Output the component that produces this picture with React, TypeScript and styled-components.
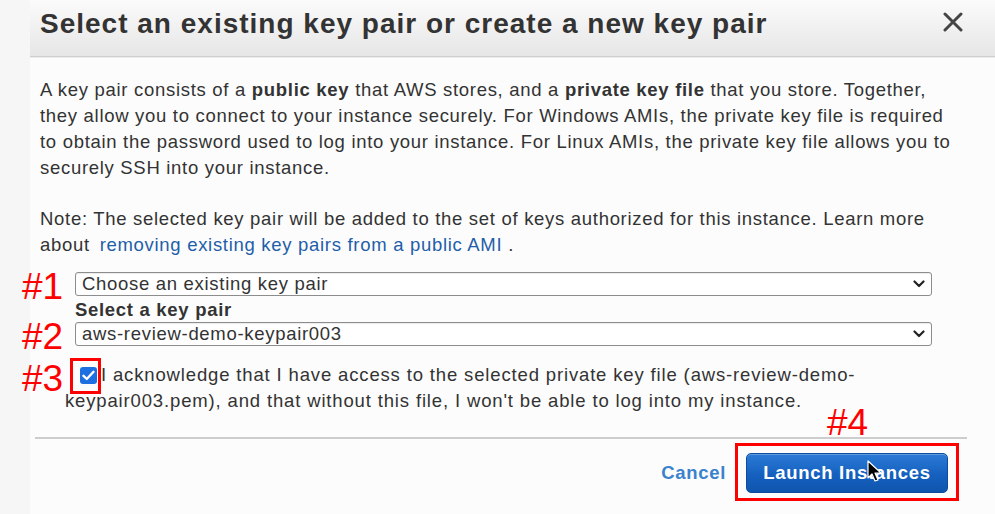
import React from "react";
import styled, { createGlobalStyle } from "styled-components";

const Global = createGlobalStyle`
  html, body { margin: 0; padding: 0; background: #f6f6f6; }
  body { font-family: "Liberation Sans", Arial, Helvetica, sans-serif; }
`;

const Page = styled.div`
  width: 995px;
  height: 514px;
  display: flex;
  padding-left: 30px;
  box-sizing: border-box;
  overflow: hidden;
`;

const Dialog = styled.div`
  flex: 1;
  display: flex;
  flex-direction: column;
  background: #fcfcfc;
`;

const Header = styled.div`
  height: 56px;
  flex-shrink: 0;
  display: flex;
  align-items: center;
  justify-content: space-between;
  padding: 0 32px 0 10px;
  background: linear-gradient(#fbfbfb, #e6e6e6);
  border-bottom: 1px solid #cfcfcf;
  box-shadow: 0 1px 0 #ececec;
`;

const Title = styled.h1`
  margin: -8px 0 0;
  font-size: 28px;
  font-weight: bold;
  color: #333;
  letter-spacing: 1px;
  white-space: nowrap;
`;

const Close = styled.button`
  border: 0;
  background: none;
  padding: 0;
  margin-top: -12px;
  width: 20px;
  height: 20px;
  display: flex;
`;

const Body = styled.div`
  padding: 20px 20px 0 10px;
  color: #333;
  font-size: 18.5px;
  letter-spacing: 0.7px;
`;

const Para = styled.p<{ $gap: number }>`
  margin: 0 0 ${(p) => p.$gap}px;
  line-height: 26px;
  white-space: nowrap;
`;

const Link = styled.a`
  color: #1f5ea9;
  text-decoration: none;
  margin-left: 4px;
`;

const FieldRow = styled.div<{ $top: number }>`
  position: relative;
  margin: ${(p) => p.$top}px 0 0 35px;
  width: 857px;
`;

const Annot = styled.span<{ $left: number; $top: number }>`
  position: absolute;
  left: ${(p) => p.$left}px;
  top: ${(p) => p.$top}px;
  color: #ff0000;
  font-family: "Liberation Sans", Arial, sans-serif;
  font-size: 37px;
  line-height: 37px;
  letter-spacing: 0;
  white-space: nowrap;
`;

const SelectBox = styled.div`
  height: 22px;
  border: 1px solid #8d8d8d;
  border-radius: 3px;
  background: #fff;
  display: flex;
  align-items: center;
  justify-content: space-between;
  padding: 0 6px 0 6px;
  color: #333;
  box-shadow: inset 0 1px 1px rgba(0, 0, 0, 0.08);
`;

const Label = styled.div`
  margin: 2px 0 0 35px;
  font-weight: bold;
  line-height: 24px;
  color: #333;
`;

const Ack = styled.div`
  position: relative;
  margin: 16px 0 0 25px;
  line-height: 26px;
  color: #333;
  letter-spacing: 0.85px;
  white-space: nowrap;
`;

const CheckWrap = styled.span`
  position: relative;
  display: inline-block;
  vertical-align: 0;
  margin: 0 4px 0 15px;
`;

const Check = styled.span`
  width: 17px;
  height: 17px;
  border-radius: 3px;
  background: #1d6fe2;
  display: flex;
  align-items: center;
  justify-content: center;
`;

const RedBox = styled.span<{ $t: number; $r: number; $b: number; $l: number }>`
  position: absolute;
  top: ${(p) => p.$t}px;
  right: ${(p) => p.$r}px;
  bottom: ${(p) => p.$b}px;
  left: ${(p) => p.$l}px;
  border: 3px solid #ff0000;
  pointer-events: none;
`;

const Divider = styled.hr`
  margin: 23px 0 0 -5px;
  border: 0;
  border-top: 2px solid #cdcdcd;
  width: 932px;
`;

const Footer = styled.div`
  display: flex;
  justify-content: flex-end;
  align-items: center;
  gap: 20px;
  padding: 14px 0 0;
  margin-right: 27px;
`;

const Cancel = styled.a`
  color: #3a82cc;
  font-weight: bold;
  text-decoration: none;
`;

const BtnWrap = styled.div`
  position: relative;
`;

const LaunchBtn = styled.button`
  width: 202px;
  height: 40px;
  border-radius: 5px;
  border: 1px solid #0c4b9e;
  background: linear-gradient(#2b7bd6, #1560bf 55%, #0f55ad);
  color: #fff;
  font-family: "Liberation Sans", Arial, sans-serif;
  font-weight: bold;
  font-size: 18.5px;
  letter-spacing: 0.7px;
  padding: 0;
  box-shadow: inset 0 1px 0 rgba(255, 255, 255, 0.25);
`;

const Cursor = styled.svg`
  position: absolute;
  left: 121px;
  top: 7px;
`;

export default function App() {
  return (
    <>
      <Global />
      <Page>
        <Dialog>
          <Header>
            <Title>Select an existing key pair or create a new key pair</Title>
            <Close aria-label="close">
              <svg width="20" height="20" viewBox="0 0 20 20">
                <path d="M2 2 L18 18 M18 2 L2 18" stroke="#444" strokeWidth="3" strokeLinecap="round" />
              </svg>
            </Close>
          </Header>
          <Body>
            <Para $gap={25}>
              A key pair consists of a <b>public key</b> that AWS stores, and a <b>private key file</b> that you store. Together,
              <br />
              they allow you to connect to your instance securely. For Windows AMIs, the private key file is required
              <br />
              to obtain the password used to log into your instance. For Linux AMIs, the private key file allows you to
              <br />
              securely SSH into your instance.
            </Para>
            <Para $gap={0}>
              Note: The selected key pair will be added to the set of keys authorized for this instance. Learn more
              <br />
              about <Link href="#">removing existing key pairs from a public AMI</Link> .
            </Para>
            <FieldRow $top={14}>
              <Annot $left={-53} $top={-4}>#1</Annot>
              <SelectBox>
                <span>Choose an existing key pair</span>
                <Chevron />
              </SelectBox>
            </FieldRow>
            <Label>Select a key pair</Label>
            <FieldRow $top={0}>
              <Annot $left={-53} $top={-4}>#2</Annot>
              <SelectBox>
                <span>aws-review-demo-keypair003</span>
                <Chevron />
              </SelectBox>
            </FieldRow>
            <Ack>
              <Annot $left={-43} $top={-2}>#3</Annot>
              <CheckWrap>
                <Check>
                  <svg width="13" height="11" viewBox="0 0 13 11">
                    <path d="M1.5 5.8 L4.8 9 L11.5 1.8" fill="none" stroke="#fff" strokeWidth="2.4" strokeLinecap="round" strokeLinejoin="round" />
                  </svg>
                </Check>
                <RedBox $t={-9} $r={-4} $b={-10} $l={-10} />
              </CheckWrap>
              I acknowledge that I have access to the selected private key file (aws-review-demo-
              <br />
              keypair003.pem), and that without this file, I won't be able to log into my instance.
            </Ack>
            <Divider />
            <Footer>
              <Cancel href="#">Cancel</Cancel>
              <BtnWrap>
                <Annot $left={81} $top={-49}>#4</Annot>
                <LaunchBtn>Launch Instances</LaunchBtn>
                <RedBox $t={-10} $r={-11} $b={-8} $l={-11} />
                <Cursor width="16" height="24" viewBox="0 0 16 24">
                  <path d="M1 1 L1 18 L5 14 L8 21 L11 20 L8 13 L14 13 Z" fill="#000" stroke="#fff" strokeWidth="1.2" strokeLinejoin="round" />
                </Cursor>
              </BtnWrap>
            </Footer>
          </Body>
        </Dialog>
      </Page>
    </>
  );
}

function Chevron() {
  return (
    <svg width="12" height="8" viewBox="0 0 12 8">
      <path d="M1.5 1.5 L6 6 L10.5 1.5" fill="none" stroke="#222" strokeWidth="2.2" strokeLinecap="round" strokeLinejoin="round" />
    </svg>
  );
}
